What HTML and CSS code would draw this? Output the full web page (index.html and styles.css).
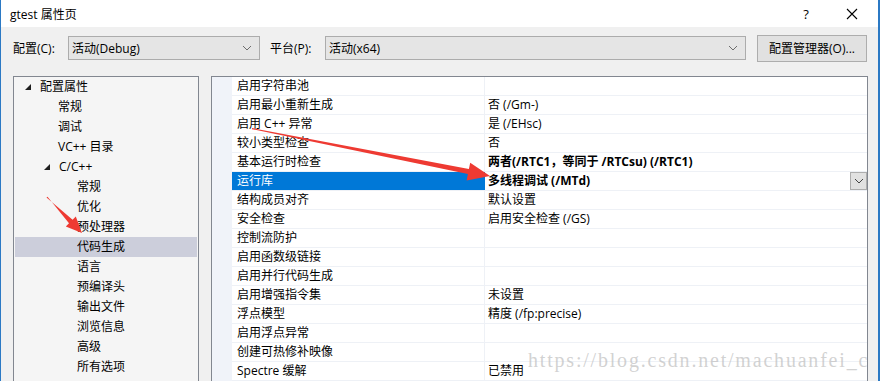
FILE: index.html
```html
<!DOCTYPE html>
<html lang="zh-CN">
<head>
    <meta charset="UTF-8">
    <title>gtest 属性页</title>
    <link rel="stylesheet" href="styles.css">
</head>
<body>
    <div class="window">
        <!-- title bar -->
        <div class="titlebar">
            <span class="title">gtest 属性页</span>
            <span class="title-btn help">?</span>
            <span class="title-btn close">
                <svg width="12" height="12" viewBox="0 0 12 12"><path d="M1 1 L11 11 M11 1 L1 11" stroke="#000" stroke-width="1.1" fill="none"/></svg>
            </span>
        </div>

        <!-- configuration row -->
        <div class="config-row">
            <span class="label">配置(C):</span>
            <div class="combo combo-config">
                <span>活动(Debug)</span>
                <svg class="chev" width="10" height="6" viewBox="0 0 10 6"><path d="M1 1 L5 5 L9 1" stroke="#6d6d6d" fill="none"/></svg>
            </div>
            <span class="label label-platform">平台(P):</span>
            <div class="combo combo-platform">
                <span>活动(x64)</span>
                <svg class="chev" width="10" height="6" viewBox="0 0 10 6"><path d="M1 1 L5 5 L9 1" stroke="#6d6d6d" fill="none"/></svg>
            </div>
            <button class="manager-btn">配置管理器(O)...</button>
        </div>

        <div class="main">
            <!-- left tree -->
            <div class="tree">
                <div class="tree-item lvl0"><svg class="tri" width="6" height="6" viewBox="0 0 6 6"><polygon points="6,0 6,6 0,6" fill="#1e1e1e"/></svg>配置属性</div>
                <div class="tree-item lvl1">常规</div>
                <div class="tree-item lvl1">调试</div>
                <div class="tree-item lvl1">VC++ 目录</div>
                <div class="tree-item lvl1 has-tri"><svg class="tri" width="6" height="6" viewBox="0 0 6 6"><polygon points="6,0 6,6 0,6" fill="#1e1e1e"/></svg>C/C++</div>
                <div class="tree-item lvl2">常规</div>
                <div class="tree-item lvl2">优化</div>
                <div class="tree-item lvl2">预处理器</div>
                <div class="tree-item lvl2 selected">代码生成</div>
                <div class="tree-item lvl2">语言</div>
                <div class="tree-item lvl2">预编译头</div>
                <div class="tree-item lvl2">输出文件</div>
                <div class="tree-item lvl2">浏览信息</div>
                <div class="tree-item lvl2">高级</div>
                <div class="tree-item lvl2">所有选项</div>
            </div>

            <!-- property grid -->
            <div class="grid-box">
                <div class="gutter"></div>
                <div class="rows">
                    <div class="prop-row"><div class="prop">启用字符串池</div><div class="val"></div></div>
                    <div class="prop-row"><div class="prop">启用最小重新生成</div><div class="val">否 (/Gm-)</div></div>
                    <div class="prop-row"><div class="prop">启用 C++ 异常</div><div class="val">是 (/EHsc)</div></div>
                    <div class="prop-row"><div class="prop">较小类型检查</div><div class="val">否</div></div>
                    <div class="prop-row"><div class="prop">基本运行时检查</div><div class="val bold">两者(/RTC1，等同于 /RTCsu) (/RTC1)</div></div>
                    <div class="prop-row active">
                        <div class="prop">运行库</div>
                        <div class="val bold">多线程调试 (/MTd)
                            <span class="drop-btn"><svg width="10" height="6" viewBox="0 0 10 6"><path d="M1 1 L5 5 L9 1" stroke="#444" fill="none"/></svg></span>
                        </div>
                    </div>
                    <div class="prop-row"><div class="prop">结构成员对齐</div><div class="val">默认设置</div></div>
                    <div class="prop-row"><div class="prop">安全检查</div><div class="val">启用安全检查 (/GS)</div></div>
                    <div class="prop-row"><div class="prop">控制流防护</div><div class="val"></div></div>
                    <div class="prop-row"><div class="prop">启用函数级链接</div><div class="val"></div></div>
                    <div class="prop-row"><div class="prop">启用并行代码生成</div><div class="val"></div></div>
                    <div class="prop-row"><div class="prop">启用增强指令集</div><div class="val">未设置</div></div>
                    <div class="prop-row"><div class="prop">浮点模型</div><div class="val">精度 (/fp:precise)</div></div>
                    <div class="prop-row"><div class="prop">启用浮点异常</div><div class="val"></div></div>
                    <div class="prop-row"><div class="prop">创建可热修补映像</div><div class="val"></div></div>
                    <div class="prop-row"><div class="prop">Spectre 缓解</div><div class="val">已禁用</div></div>
                </div>
            </div>
        </div>

        <!-- watermark over the grid -->
        <div class="watermark">https://blog.csdn.net/machuanfei_c</div>

        <!-- red annotation arrows -->
        <svg class="arrows" width="880" height="381" viewBox="0 0 880 381">
            <polygon points="252,128 468.9,169.1 470.2,162.8 490,176 466.6,180.4 467.9,174.1 252,129.2" fill="#ee3a32"/>
            <polygon points="46.5,197.5 72.6,219.8 75.8,216.6 82,233 65.8,226.4 69,223.2 47.5,196.8" fill="#ee3a32"/>
        </svg>
    </div>
</body>
</html>
```

FILE: styles.css
```css
body {
    margin: 0;
    width: 880px;
    height: 381px;
    overflow: hidden;
    font-family: "Open Sans", "Noto Sans CJK SC", sans-serif;
    font-size: 12px;
    color: #000;
}

.window {
    position: relative;
    height: 381px;
    background-color: #f0f0f0;
    border-left: 1px solid #2b79c4;
    border-right: 2px solid #2b79c4;
    box-sizing: border-box;
}

.titlebar {
    height: 27px;
    background-color: #fff;
    display: flex;
    align-items: center;
}

.title {
    padding-left: 9px;
    flex: 1;
}

.title-btn {
    display: flex;
    align-items: center;
    justify-content: center;
    width: 46px;
    height: 27px;
    font-size: 13px;
}

.help {
    margin-right: 0;
}

.close {
    margin-right: 3px;
}

.config-row {
    display: flex;
    align-items: center;
    height: 40px;
    padding-top: 1px;
    padding-left: 12px;
}

.label {
    width: 55px;
}

.label-platform {
    margin-left: 10px;
}

.combo {
    height: 24px;
    box-sizing: border-box;
    border: 1px solid #acacac;
    background-color: #e5e5e5;
    display: flex;
    align-items: center;
    padding-left: 3px;
    padding-right: 7px;
}

.combo span {
    flex: 1;
}

.combo-config {
    width: 192px;
}

.combo-platform {
    width: 421px;
}

.manager-btn {
    margin-left: 11px;
    width: 110px;
    height: 27px;
    border: 1px solid #adadad;
    background-color: #e1e1e1;
    font-family: inherit;
    font-size: 12px;
    color: #000;
    padding: 0;
}

.main {
    display: flex;
    padding-top: 8px;
    padding-left: 12px;
    gap: 12px;
}

.tree {
    width: 186px;
    height: 320px;
    box-sizing: border-box;
    border: 1px solid #828790;
    background-color: #f5f5f5;
    padding: 0 1px;
}

.tree-item {
    height: 20px;
    line-height: 20px;
    white-space: nowrap;
    display: flex;
    align-items: center;
}

.tri {
    margin-right: 9px;
}

.lvl0 {
    padding-left: 10px;
}

.lvl1 {
    padding-left: 43px;
}

.lvl1.has-tri {
    padding-left: 29px;
}

.lvl2 {
    padding-left: 62px;
}

.selected {
    background-color: #cccedb;
}

.grid-box {
    width: 657px;
    height: 320px;
    box-sizing: border-box;
    border: 1px solid #828790;
    border-bottom: none;
    display: flex;
    background-color: #fff;
}

.gutter {
    width: 20px;
    background-color: #f0f3f9;
}

.rows {
    flex: 1;
}

.prop-row {
    display: flex;
    height: 19px;
    box-sizing: border-box;
    border-bottom: 1px solid #eef1f6;
}

.prop {
    width: 253px;
    box-sizing: border-box;
    padding-left: 5px;
    line-height: 18px;
    border-right: 1px solid #eef1f6;
    white-space: nowrap;
}

.val {
    flex: 1;
    padding-left: 3px;
    line-height: 18px;
    white-space: nowrap;
    display: flex;
    align-items: center;
}

.bold {
    font-weight: bold;
}

.active .prop {
    background-color: #0078d7;
    color: #fff;
    border-right-color: #0078d7;
}

.drop-btn {
    margin-left: auto;
    width: 17px;
    height: 18px;
    box-sizing: border-box;
    border: 1px solid #adadad;
    background-color: #e1e1e1;
    display: flex;
    align-items: center;
    justify-content: center;
}

.watermark {
    position: absolute;
    left: 527px;
    top: 349px;
    font-family: "Liberation Serif", serif;
    font-size: 20px;
    letter-spacing: 1.8px;
    color: rgba(190, 190, 190, 0.7);
    white-space: nowrap;
}

.arrows {
    position: absolute;
    left: -1px;
    top: 0;
    pointer-events: none;
}
```
